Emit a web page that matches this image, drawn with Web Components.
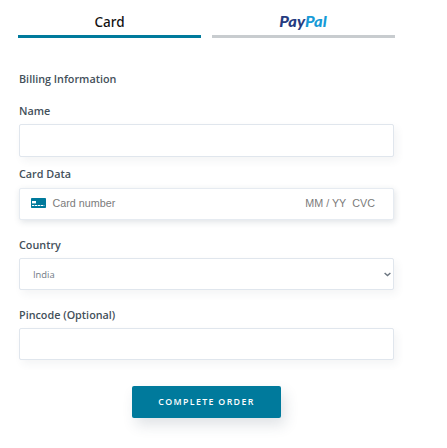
<!DOCTYPE html>
<html lang="en">
<head>
<meta charset="utf-8">
<title>Checkout</title>
<style>
  body {
    margin: 0;
    background: #fff;
    font-family: "Open Sans", "Noto Sans", sans-serif;
  }
</style>
</head>
<body>
<checkout-form>
  <pay-tab slot="tabs" active>Card</pay-tab>
  <pay-tab slot="tabs"><paypal-logo></paypal-logo></pay-tab>
  <form-field label="Name" style="--box: 33px; --gap: 9px"></form-field>
  <form-field label="Card Data" raised style="--gap: 17px; --label-gap: 6px"><card-input></card-input></form-field>
  <form-field label="Country"><country-select>India</country-select></form-field>
  <form-field label="Pincode (Optional)" style="--gap: 26px"></form-field>
  <order-button slot="action">COMPLETE ORDER</order-button>
</checkout-form>

<script>
class CheckoutForm extends HTMLElement {
    constructor() {
        super();
        this.attachShadow({ mode: 'open' });
    }

    connectedCallback() {
        this.shadowRoot.innerHTML = `
        <style>
          :host {
            display: flex;
            flex-direction: column;
            box-sizing: border-box;
            width: 447px;
            height: 448px;
            padding: 0 53px 0 19px;
            overflow: hidden;
          }
          nav {
            display: grid;
            grid-template-columns: 183px 183px;
            gap: 11px;
            height: 38px;
            margin-left: -1px;
          }
          h2 {
            margin: 33px 0 16px;
            font-size: 10.8px;
            line-height: 16px;
            font-weight: 600;
            color: #43505a;
          }
          footer {
            display: flex;
            justify-content: center;
          }
        </style>
        <nav><slot name="tabs"></slot></nav>
        <h2>Billing Information</h2>
        <slot></slot>
        <footer><slot name="action"></slot></footer>
        `;
    }
}

class PayTab extends HTMLElement {
    constructor() {
        super();
        this.attachShadow({ mode: 'open' });
    }

    connectedCallback() {
        this.shadowRoot.innerHTML = `
        <style>
          :host {
            display: flex;
            justify-content: center;
            align-items: center;
            box-sizing: border-box;
            height: 38px;
            padding-top: 8px;
            border-bottom: 3px solid #c8cccf;
            color: #111;
            font-family: "Noto Sans", "Open Sans", sans-serif;
            font-size: 13.5px;
            font-weight: 500;
            line-height: 18px;
            cursor: pointer;
          }
          :host([active]) {
            border-bottom-color: #007a9c;
          }
        </style>
        <slot></slot>
        `;
    }
}

class PaypalLogo extends HTMLElement {
    constructor() {
        super();
        this.attachShadow({ mode: 'open' });
    }

    connectedCallback() {
        this.shadowRoot.innerHTML = `
        <style>
          :host { display: block; width: 50px; height: 18px; }
          svg { display: block; }
          text { font: italic 900 14.5px Lato, sans-serif; }
        </style>
        <svg width="50" height="18" viewBox="0 0 50 18">
          <text x=".2" y="13.5" textLength="47.5" lengthAdjust="spacingAndGlyphs"><tspan fill="#253b80">Pay</tspan><tspan fill="#179bd7">Pal</tspan></text>
        </svg>
        `;
    }
}

// Label above a bordered box, the slot fills the box
class FormField extends HTMLElement {
    constructor() {
        super();
        this.attachShadow({ mode: 'open' });
    }

    connectedCallback() {
        this.shadowRoot.innerHTML = `
        <style>
          :host {
            display: block;
            margin-bottom: var(--gap, 17px);
          }
          label {
            display: block;
            height: 16px;
            margin-bottom: var(--label-gap, 5px);
            font-size: 10.8px;
            line-height: 16px;
            font-weight: 600;
            color: #43505a;
          }
          .box {
            display: flex;
            align-items: center;
            box-sizing: border-box;
            height: var(--box, 32px);
            border: 1px solid #e0e6ed;
            border-radius: 2px;
            background: #fff;
            box-shadow: 3px 4px 8px rgba(50, 70, 90, .06);
          }
          :host([raised]) .box {
            border-color: #e6ebf1;
            box-shadow: 1px 2px 6px rgba(50, 70, 90, .15);
          }
          ::slotted(*) { flex: 1; }
        </style>
        <label></label>
        <div class="box"><slot></slot></div>
        `;
        this.shadowRoot.querySelector('label').textContent = this.getAttribute('label');
    }
}

class CardInput extends HTMLElement {
    constructor() {
        super();
        this.attachShadow({ mode: 'open' });
    }

    connectedCallback() {
        this.shadowRoot.innerHTML = `
        <style>
          :host {
            display: flex;
            align-items: center;
            padding: 0 18px 2px 11px;
            font-family: "Liberation Sans", Arial, sans-serif;
            font-size: 10.75px;
            line-height: 14px;
            color: #7b7b7b;
          }
          svg { margin: 0 6.5px 0 0; }
          .number { flex: 1; }
          .cvc { margin-left: 6px; }
        </style>
        <svg width="15" height="10" viewBox="0 0 15 10">
          <rect width="15" height="10" rx=".8" fill="#007a9c"/>
          <rect x="1" y="3" width="4" height="2.4" fill="#fff"/>
          <path d="M1 7.5H13.3" stroke="#fff" stroke-width="1" stroke-dasharray="2.4 .6"/>
        </svg>
        <span class="number">Card number</span>
        <span>MM / YY</span>
        <span class="cvc">CVC</span>
        `;
    }
}

class CountrySelect extends HTMLElement {
    constructor() {
        super();
        this.attachShadow({ mode: 'open' });
    }

    connectedCallback() {
        this.shadowRoot.innerHTML = `
        <style>
          :host {
            display: flex;
            align-items: center;
            justify-content: space-between;
            padding: 2px 2px 0 13px;
            font-size: 9.4px;
            line-height: 14px;
            color: #6f7a85;
          }
          svg { margin-bottom: 2px; }
        </style>
        <span><slot></slot></span>
        <svg width="7" height="5" viewBox="0 0 7 5">
          <path d="M.6 1 3.5 3.6 6.4 1" fill="none" stroke="#6c7680" stroke-width="1.4"/>
        </svg>
        `;
    }
}

class OrderButton extends HTMLElement {
    constructor() {
        super();
        this.attachShadow({ mode: 'open' });
    }

    connectedCallback() {
        this.shadowRoot.innerHTML = `
        <style>
          :host { display: block; }
          button {
            display: block;
            width: 149px;
            height: 32px;
            padding: 0;
            border: 0;
            border-radius: 2px;
            background: #007a9c;
            box-shadow: 4px 7px 14px rgba(50, 70, 90, .15);
            color: #fff;
            font: 600 8.8px/32px "Open Sans", "Noto Sans", sans-serif;
            letter-spacing: 1.35px;
            cursor: pointer;
          }
        </style>
        <button type="button"><slot></slot></button>
        `;
    }
}

customElements.define('checkout-form', CheckoutForm);
customElements.define('pay-tab', PayTab);
customElements.define('paypal-logo', PaypalLogo);
customElements.define('form-field', FormField);
customElements.define('card-input', CardInput);
customElements.define('country-select', CountrySelect);
customElements.define('order-button', OrderButton);
</script>
</body>
</html>
